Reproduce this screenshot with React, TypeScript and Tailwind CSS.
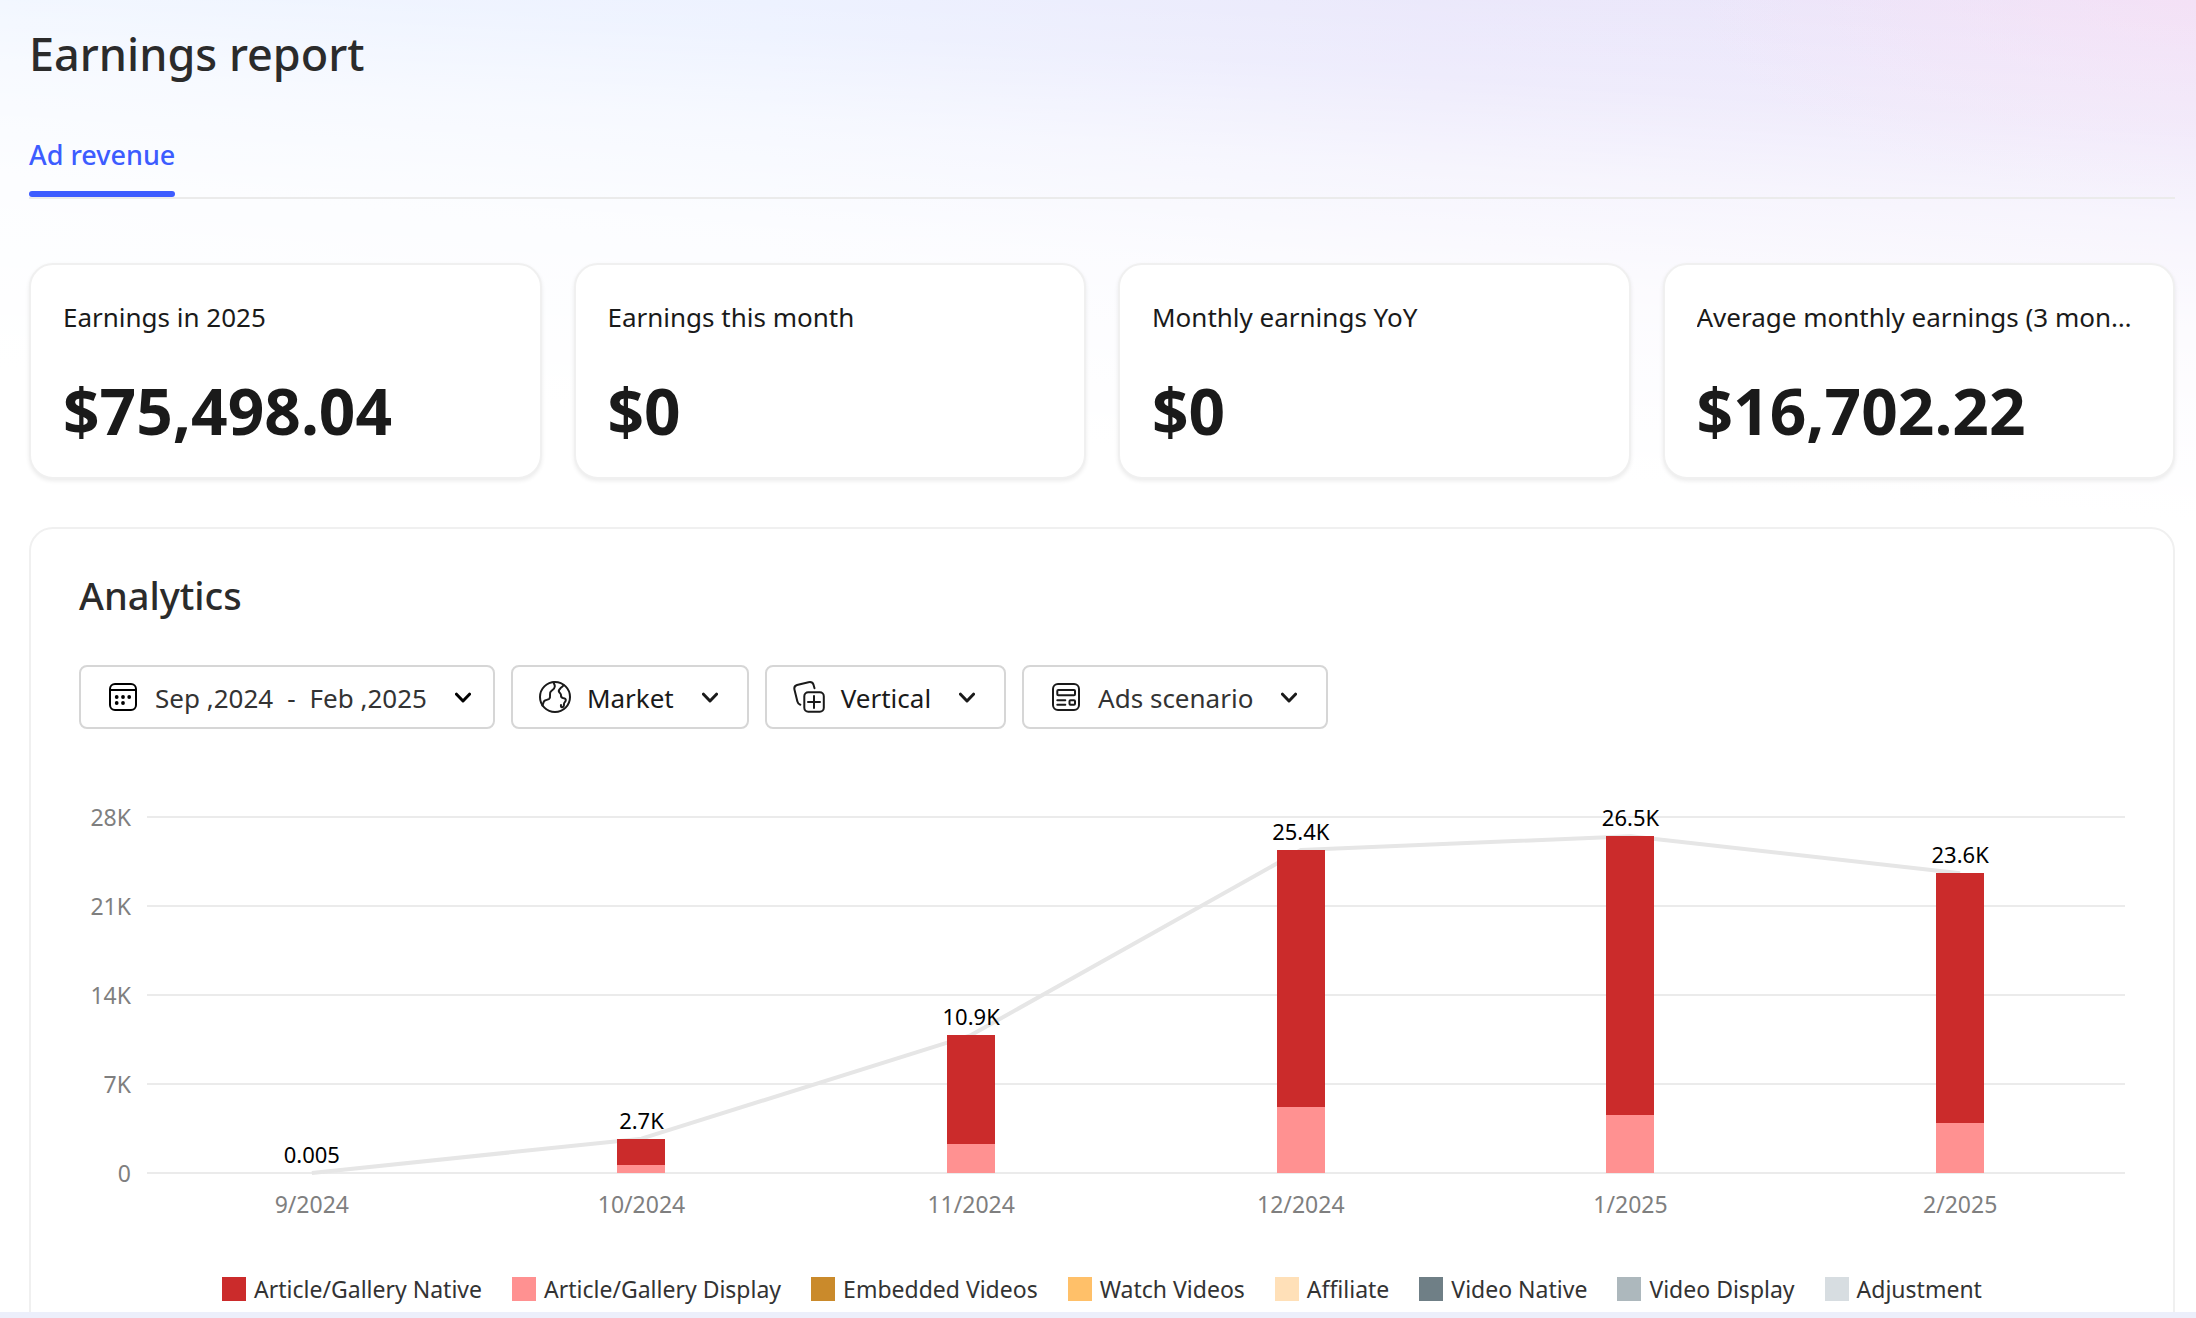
import React from 'react';

const font = "font-['Noto_Sans',sans-serif]";

interface Stat {
  label: string;
  value: string;
}

interface Month {
  label: string;
  total: string;
  native: number;
  display: number;
}

const stats: Stat[] = [
  { label: 'Earnings in 2025', value: '$75,498.04' },
  { label: 'Earnings this month', value: '$0' },
  { label: 'Monthly earnings YoY', value: '$0' },
  { label: 'Average monthly earnings (3 months)', value: '$16,702.22' },
];

const months: Month[] = [
  { label: '9/2024', total: '0.005', native: 0, display: 0 },
  { label: '10/2024', total: '2.7K', native: 2100, display: 600 },
  { label: '11/2024', total: '10.9K', native: 8550, display: 2300 },
  { label: '12/2024', total: '25.4K', native: 20240, display: 5160 },
  { label: '1/2025', total: '26.5K', native: 21890, display: 4600 },
  { label: '2/2025', total: '23.6K', native: 19640, display: 3940 },
];

const ticks = ['28K', '21K', '14K', '7K', '0'];
const maxValue = 28000;

const legend = [
  { label: 'Article/Gallery Native', color: 'bg-[#cb2b2b]' },
  { label: 'Article/Gallery Display', color: 'bg-[#ff9191]' },
  { label: 'Embedded Videos', color: 'bg-[#ca8a2b]' },
  { label: 'Watch Videos', color: 'bg-[#ffc069]' },
  { label: 'Affiliate', color: 'bg-[#ffe0b8]' },
  { label: 'Video Native', color: 'bg-[#6f7f86]' },
  { label: 'Video Display', color: 'bg-[#adb8bd]' },
  { label: 'Adjustment', color: 'bg-[#d7dde1]' },
];

const iconProps = {
  viewBox: '0 0 32 32',
  fill: 'none',
  stroke: 'currentColor',
  strokeWidth: 2,
  strokeLinecap: 'round' as const,
  strokeLinejoin: 'round' as const,
  className: 'w-8 h-8 shrink-0',
  'aria-hidden': true,
};

const CalendarIcon = () => (
  <svg {...iconProps}>
    <rect x="3" y="3" width="26" height="26" rx="5" />
    <path d="M3 9h26" />
    <g fill="currentColor" stroke="none">
      <circle cx="9.7" cy="16" r="1.9" />
      <circle cx="16" cy="16" r="1.9" />
      <circle cx="22.200" cy="16" r="1.9" />
      <circle cx="9.7" cy="22" r="1.9" />
      <circle cx="16" cy="22" r="1.9" />
    </g>
  </svg>
);

const GlobeIcon = () => (
  <svg {...iconProps}>
    <circle cx="16" cy="16" r="15" />
    <path d="M14.500 1.200c.2 1.300 1.500 2.500 1.300 4.300-.2 2.500-1.800 3-3.300 4.300-1.500 1.200-1.700 2.200-1.500 3.700.2 1.700.5 3.300-1 4.500-1.500 1.100-3.500.7-4.700 2-1.100 1.200-1 2.700-1.900 4.500" />
    <path d="M24.700 4c-1.200 1.700-2.200 2.300-3.200 3.200-1.500 1.300-2.500 2.300-1.300 4 1 1.300 2 1.500 1.800 3.300-.1 1.600.7 2.200 2 2.500 1.800.3 3.200 1 2.700 2.800-.4 1.400-1.700 1.700-1.700 3.200 0 1.600-.2 3-1.700 3.300-1.200.2-1.600-.9-1.300-2.300" />
  </svg>
);

const CardsAddIcon = () => (
  <svg {...iconProps}>
    <rect x="11.300" y="11.300" width="19.500" height="19.500" rx="4" />
    <path d="M21 15v12M15 21h12" />
    <path d="M7.300 23.700c-1.500-.5-2.500-1.700-2.900-3.300L1.500 8.700C.9 6.200 2 4.600 4 4l11.500-2.700c2.400-.6 4.200.2 5 2.400l1 3.500" />
  </svg>
);

const AdsIcon = () => (
  <svg {...iconProps}>
    <rect x="3" y="3" width="26" height="26" rx="5" />
    <rect x="7.300" y="9" width="17.700" height="5.300" rx="1" />
    <path d="M7.300 19.300h8M7.300 23.700h8" />
    <rect x="19.500" y="19.300" width="5.500" height="4.400" rx="1" />
  </svg>
);

const ChevronIcon = () => (
  <svg viewBox="0 0 16 16" fill="none" stroke="currentColor" strokeWidth={3} strokeLinecap="round" strokeLinejoin="round" className="w-4 h-4 shrink-0" aria-hidden>
    <path d="M1.500 5.200 8 12l6.500-6.800" />
  </svg>
);

interface FilterButtonProps {
  icon: React.ReactNode;
  children: React.ReactNode;
  className?: string;
}

const FilterButton: React.FC<FilterButtonProps> = ({ icon, children, className = 'pr-[29px]' }) => (
  <button type="button" aria-haspopup="listbox" className={`flex items-center h-16 pl-[26px] border-2 border-[#d6d6d6] rounded-lg bg-white text-[26px] whitespace-nowrap ${className}`}>
    {icon}
    <span className="ml-4 mr-7 pt-[2px] flex gap-[14px]">{children}</span>
    <ChevronIcon />
  </button>
);

const StatCard: React.FC<Stat> = ({ label, value }) => (
  <article className="min-w-0 bg-white border-2 border-[#f0f0f0] rounded-3xl px-8 pt-8 pb-6 shadow-[0_2px_4px_rgba(0,0,0,0.08)]">
    <h2 className="text-[26px] leading-10 truncate">{label}</h2>
    <p className="mt-8 text-[64px] leading-[84px] font-bold">{value}</p>
  </article>
);

const Chart: React.FC = () => {
  const points = months.map((m, i) => ({
    x: ((i + 0.5) / months.length) * 100,
    y: 100 - ((m.native + m.display) / maxValue) * 100,
  }));

  return (
    <div className="mt-[88px] flex text-[23px]">
      <div className="w-[52px] h-[356px] flex flex-col justify-between text-right text-[#7f7f7f]">
        {ticks.map(tick => (
          <span key={tick} className="h-0 flex items-center justify-end">{tick}</span>
        ))}
      </div>
      <div className="flex-1 ml-4">
        <div className="relative h-[356px]">
          <div className="absolute inset-0 flex flex-col justify-between">
            {ticks.map(tick => (
              <div key={tick} className="h-0 flex items-center">
                <div className="h-[2px] w-full shrink-0 bg-[#ebebeb]" />
              </div>
            ))}
          </div>
          <svg viewBox="0 0 100 100" preserveAspectRatio="none" className="absolute inset-0 w-full h-full overflow-visible" aria-hidden>
            <polyline
              points={points.map(p => `${p.x},${p.y}`).join(' ')}
              fill="none"
              stroke="#e6e6e6"
              strokeWidth={4}
              strokeLinejoin="round"
              vectorEffect="non-scaling-stroke"
            />
          </svg>
          <div className="absolute inset-0 grid grid-cols-6">
            {months.map(m => (
              <div key={m.label} className="min-h-0 flex flex-col items-center justify-end">
                <span className="text-[22px] leading-[38px] shrink-0 text-black">{m.total}</span>
                <div className="w-12 shrink-0 bg-[#cb2b2b]" style={{ height: `${(m.native / maxValue) * 100}%` }} />
                <div className="w-12 shrink-0 bg-[#ff9191]" style={{ height: `${(m.display / maxValue) * 100}%` }} />
              </div>
            ))}
          </div>
        </div>
        <div className="mt-[15px] grid grid-cols-6 text-center leading-8 text-[#7f7f7f]">
          {months.map(m => (
            <span key={m.label}>{m.label}</span>
          ))}
        </div>
      </div>
    </div>
  );
};

const App: React.FC = () => {
  return (
    <div className={`${font} h-screen overflow-hidden flex flex-col bg-white text-[#1a1a1a]`}>
      <main className="flex-1 min-h-0 overflow-hidden pl-[29px] pr-[21px] bg-[linear-gradient(184deg,rgba(255,255,255,0)_0px,rgba(255,255,255,0.25)_130px,rgba(255,255,255,0.6)_220px,rgba(255,255,255,0.85)_330px,#ffffff_520px),radial-gradient(500px_200px_at_top_right,rgba(246,224,245,0.8),rgba(246,224,245,0)),linear-gradient(to_right,#ecf3ff_0%,#e9efff_35%,#e9e6fb_65%,#ece5fa_100%)]">
        <h1 className="pt-6 text-[45px] leading-[60px] font-medium text-[#2b2b2b]">Earnings report</h1>
        <div role="tablist" className="mt-[45px] flex border-b-2 border-[#ebebeb]">
          <button type="button" role="tab" aria-selected="true" className="text-[27px] leading-[52px] font-medium text-[#3d5cff]">
            Ad revenue
            <span className="block mt-[10px] h-[6px] rounded-full bg-[#3d5cff]" />
          </button>
        </div>

        <div className="mt-16 grid grid-cols-4 gap-8">
          {stats.map(stat => (
            <StatCard key={stat.label} {...stat} />
          ))}
        </div>

        <section className="mt-12 bg-white border-2 border-[#f0f0f0] rounded-3xl px-12 pt-10 pb-12">
          <h2 className="text-[38px] leading-[52px] font-medium text-[#2b2b2b]">Analytics</h2>
          <div className="mt-11 flex gap-4">
            <FilterButton icon={<CalendarIcon />} className="pr-[22px] text-black">
              <span className="text-[#333333]">Sep ,2024</span>
              <span className="text-[#333333]">-</span>
              <span className="text-[#333333]">Feb ,2025</span>
            </FilterButton>
            <FilterButton icon={<GlobeIcon />}>Market</FilterButton>
            <FilterButton icon={<CardsAddIcon />}>Vertical</FilterButton>
            <FilterButton icon={<AdsIcon />}>
              <span className="text-[#333333]">Ads scenario</span>
            </FilterButton>
          </div>

          <Chart />

          <ul className="mt-[53px] flex justify-center gap-[30px] text-[23px] leading-8 whitespace-nowrap text-[#333333]">
            {legend.map(item => (
              <li key={item.label} className="flex items-center gap-2">
                <span className={`w-6 h-6 ${item.color}`} />
                {item.label}
              </li>
            ))}
          </ul>
        </section>
      </main>
      <footer className="h-[6px] shrink-0 bg-[#eceffb]" />
    </div>
  );
};

export default App;
